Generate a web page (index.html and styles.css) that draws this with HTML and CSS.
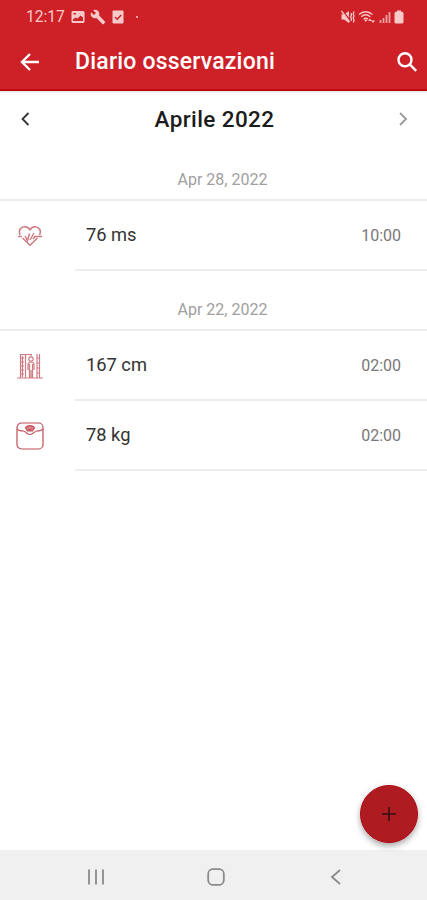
FILE: index.html
```html
<!DOCTYPE html>
<html lang="it">
<head>
    <meta charset="UTF-8">
    <meta name="viewport" content="width=device-width, initial-scale=1.0">
    <title>Diario osservazioni</title>
    <link rel="stylesheet" href="styles.css">
</head>
<body>
    <div class="app">
        <header class="header">
            <div class="status-bar">
                <span class="status-time">12:17</span>
                <svg class="status-image" width="14" height="14" viewBox="0 0 14 14">
                    <path fill="currentColor" fill-rule="evenodd" d="M1.500 1h11l1 1v10l-1 1h-11l-1-1V2zM2.500 3v1.500h2.500V3zM2 11h10V7.500L9.500 5.500 6.500 8.500 4.500 7.500 2 9.500z"/>
                </svg>
                <svg class="status-wrench" width="16" height="16" viewBox="0 0 24 24">
                    <path fill="currentColor" d="M22.700 19l-9.100-9.100c.9-2.300.4-5-1.500-6.900-2-2-5-2.400-7.400-1.300L9 6 6 9 1.600 4.700C.4 7.100.9 10.100 2.900 12.100c1.900 1.900 4.600 2.400 6.900 1.500l9.100 9.100c.4.4 1 .4 1.400 0l2.300-2.300c.5-.4.5-1.100.1-1.400z"/>
                </svg>
                <svg class="status-check" width="12" height="14" viewBox="0 0 12 14">
                    <path fill="currentColor" d="M1 1h10v12H1z" stroke="currentColor" stroke-linejoin="round"/>
                    <path class="check-mark" d="M3 7l2.200 2.200L9.200 5"/>
                </svg>
                <span class="status-dot"></span>
                <div class="status-right">
                    <svg width="14" height="14" viewBox="0 0 14 14">
                        <path fill="currentColor" d="M.5 4.500H3L8 1v12L3 9.500H.5z"/>
                        <path class="cut" d="M1.500 1l7 8.500"/>
                        <path class="thin" d="M.5 1l8 11"/>
                        <path class="thin" d="M10.300 3v2.500l-.8 1.500.8 1.500V11M13 1.500l-.8 2.500.8 2-.8 2 .8 2-.5 2.500"/>
                    </svg>
                    <svg width="18" height="14" viewBox="0 0 18 14">
                        <path class="thin" d="M1 4.500C5 .8 10.500.8 14.500 4.500M3.200 6.800c2.800-2.500 6.300-2.500 9.100 0M5.500 9c1.500-1.200 3-1.200 4.500 0"/>
                        <path fill="currentColor" d="M6 9.500h3.600L7.800 12zM10 11l2-2.500 2 2.500zM13 10.500h4L15 13z"/>
                    </svg>
                    <svg width="12" height="14" viewBox="0 0 12 14">
                        <path class="signal" d="M1.500 10v3M4.500 8v5M7.500 5v8M10.500 2v11"/>
                    </svg>
                    <svg width="10" height="14" viewBox="0 0 10 14">
                        <path fill="currentColor" d="M3 .5h4v1.300h1.500L9.500 3v9.500l-1 1h-7l-1-1V3l1-1.200H3z"/>
                    </svg>
                </div>
            </div>
            <div class="app-bar">
                <svg class="back-icon" width="20" height="20" viewBox="0 0 20 20">
                    <path d="M19 10H2.500M10 2l-8 8 8 8"/>
                </svg>
                <h1>Diario osservazioni</h1>
                <svg class="search-icon" width="22" height="22" viewBox="0 0 22 22">
                    <circle cx="9" cy="8.700" r="6.500"/>
                    <path d="M13.700 13.300l6.500 6.500"/>
                </svg>
            </div>
        </header>

        <main>
            <div class="month-nav">
                <svg class="month-prev" width="10" height="14" viewBox="0 0 10 14"><path d="M7.500 1l-6 6 6 6"/></svg>
                <h2>Aprile 2022</h2>
                <svg class="month-next" width="10" height="14" viewBox="0 0 10 14"><path d="M2 1l6 6-6 6"/></svg>
            </div>

            <section class="day">
                <h3>Apr 28, 2022</h3>
                <div class="row">
                    <div class="row-icon">
                        <svg class="heart-icon" width="26" height="22" viewBox="0 0 26 22">
                            <path d="M3 10C1 5 4 1.800 7.500 1.800c2.500 0 4.500 1.300 5.500 3 1-1.700 2.500-3 5-3 3.500 0 7 3.200 4.500 8.200M5.500 13l7.500 7.200 7.500-7.200"/>
                            <path d="M1 11.500h4M8 11l2.500 4.500 2-7M13 15l4-7M16 14l2-2.500h7"/>
                        </svg>
                    </div>
                    <div class="row-body">
                        <span class="value">76 ms</span>
                        <span class="time">10:00</span>
                    </div>
                </div>
            </section>

            <section class="day">
                <h3>Apr 22, 2022</h3>
                <div class="row">
                    <div class="row-icon">
                        <svg width="26" height="26" viewBox="0 0 26 26">
                            <path d="M0 25h26M3.500 1v24M8.500 1v24M3.500 1.500h11M4 5h3M4 9h3M4 13h3M4 17h3M4 21h3"/>
                            <path d="M5.500 3v21M20 1v24M22.500 1v24M20 5h2M20 10h2M20 15h2M20 20h2"/>
                            <circle cx="14" cy="6" r="2.200"/>
                            <path d="M11 17v-5c0-4 6-4 6 0v5M12.500 11v14M15.500 11v14M14 17v8M14 1v2"/>
                        </svg>
                    </div>
                    <div class="row-body">
                        <span class="value">167 cm</span>
                        <span class="time">02:00</span>
                    </div>
                </div>
                <div class="row">
                    <div class="row-icon">
                        <svg class="scale-icon" width="28" height="28" viewBox="0 0 28 28">
                            <rect x="1" y="1" width="26" height="26" rx="4.500"/>
                            <path d="M1.500 7c1 2 3 2 6 2 2 0 3 3.500 6.500 3.500S18.500 9 20.500 9c3 0 5 0 6-2"/>
                            <path class="dial" d="M9.500 5.500c2-2.500 7-2.500 9 0L16.500 9h-5zM12.500 6.500L14 8l1.500-1.500"/>
                        </svg>
                    </div>
                    <div class="row-body">
                        <span class="value">78 kg</span>
                        <span class="time">02:00</span>
                    </div>
                </div>
            </section>
        </main>

        <button class="fab" aria-label="Aggiungi">
            <svg width="16" height="16" viewBox="0 0 16 16"><path d="M8 1v14M1 8h14"/></svg>
        </button>

        <nav class="nav-bar">
            <svg width="18" height="18" viewBox="0 0 18 18"><path d="M2 1.500v15M9 1.500v15M16 1.500v15"/></svg>
            <svg width="18" height="18" viewBox="0 0 18 18"><rect x="1.200" y="1.200" width="15.600" height="15.600" rx="4.500"/></svg>
            <svg width="18" height="18" viewBox="0 0 18 18"><path d="M13 2L5 9l8 7"/></svg>
        </nav>
    </div>
</body>
</html>
```
FILE: styles.css
```css
* {
    box-sizing: border-box;
    margin: 0;
    padding: 0;
}

body {
    background-color: #fff;
    color: #222;
    font-family: Roboto, 'Liberation Sans', sans-serif;
}

svg {
    display: block;
    flex: none;
    fill: none;
}

.app {
    position: relative;
    display: flex;
    flex-direction: column;
    height: 900px;
}

/* header */
.header {
    height: 91px;
    background-color: #ce2127;
    border-bottom: 2px solid #c4070d;
    box-shadow: 0 1px 2px rgba(0, 0, 0, 0.15);
    color: #fff;
}

.status-bar {
    display: flex;
    align-items: center;
    height: 33px;
    padding: 0 23px 0 26px;
    color: #f9c9ca;
}

.status-time {
    width: 39px;
    font-size: 15.6px;
    white-space: nowrap;
}

.status-image {
    margin-left: 6px;
}

.status-wrench {
    margin-left: 5px;
}

.status-check {
    margin-left: 6px;
}

.check-mark {
    stroke: #ce2127;
    stroke-width: 1.5;
}

.status-dot {
    width: 2px;
    height: 2px;
    margin-left: 12px;
    border-radius: 50%;
    background-color: #f9c9ca;
}

.status-right {
    display: flex;
    align-items: center;
    gap: 3px;
    margin-left: auto;
}

.thin {
    stroke: currentColor;
    stroke-width: 1.3;
}

.cut {
    stroke: #ce2127;
    stroke-width: 1.5;
}

.signal {
    stroke: currentColor;
    stroke-width: 1.8;
    opacity: 0.75;
}

.app-bar {
    display: flex;
    align-items: center;
    height: 57px;
    padding: 0 9px 0 20px;
}

.app-bar h1 {
    margin-left: 35px;
    font-size: 23px;
    font-weight: 500;
    letter-spacing: 0.2px;
    white-space: nowrap;
}

.back-icon,
.search-icon {
    stroke: #fff;
    stroke-width: 2.4;
}

.search-icon {
    margin-left: auto;
}

/* month */
.month-nav {
    display: flex;
    align-items: center;
    justify-content: space-between;
    height: 50px;
    padding: 6px 19px 0 21px;
}

.month-nav h2 {
    font-size: 22.5px;
    font-weight: 500;
    letter-spacing: 0.4px;
    color: #1c1c1c;
}

.month-prev {
    stroke: #333;
    stroke-width: 1.8;
}

.month-next {
    stroke: #999;
    stroke-width: 1.8;
}

/* observations */
.day h3 {
    height: 60px;
    padding: 29px 0 0 18px;
    border-bottom: 2px solid #ededed;
    font-size: 16px;
    font-weight: 400;
    text-align: center;
    color: #a0a0a0;
}

.row {
    display: flex;
    height: 70px;
}

.row-icon {
    display: flex;
    align-items: center;
    justify-content: center;
    width: 59px;
    margin-right: 16px;
    padding-bottom: 1px;
    stroke: #cf7a82;
    stroke-width: 1.2;
}

.row-body {
    display: flex;
    flex: 1;
    align-items: center;
    justify-content: space-between;
    padding: 0 26px 0 11px;
    border-bottom: 2px solid #ededed;
}

.value {
    padding-bottom: 2px;
    font-size: 18.3px;
    color: #333;
}

.time {
    font-size: 16px;
    color: #777;
}

.heart-icon {
    stroke-width: 1.5;
}

.scale-icon {
    stroke: #c44a55;
}

.dial {
    fill: #d98087;
}

/* add button */
.fab {
    position: absolute;
    right: 9px;
    bottom: 57px;
    display: flex;
    align-items: center;
    justify-content: center;
    width: 58px;
    height: 58px;
    border: 1px solid #b3080f;
    border-radius: 50%;
    background-color: #ae1c22;
    box-shadow: 0 3px 6px rgba(0, 0, 0, 0.35);
    stroke: #351012;
    stroke-width: 1.5;
}

.nav-bar {
    display: flex;
    align-items: center;
    justify-content: space-between;
    height: 50px;
    margin-top: auto;
    padding: 4px 82px 0 87px;
    background-color: #f0f0f0;
    stroke: #8a8a8a;
    stroke-width: 1.8;
}
```
